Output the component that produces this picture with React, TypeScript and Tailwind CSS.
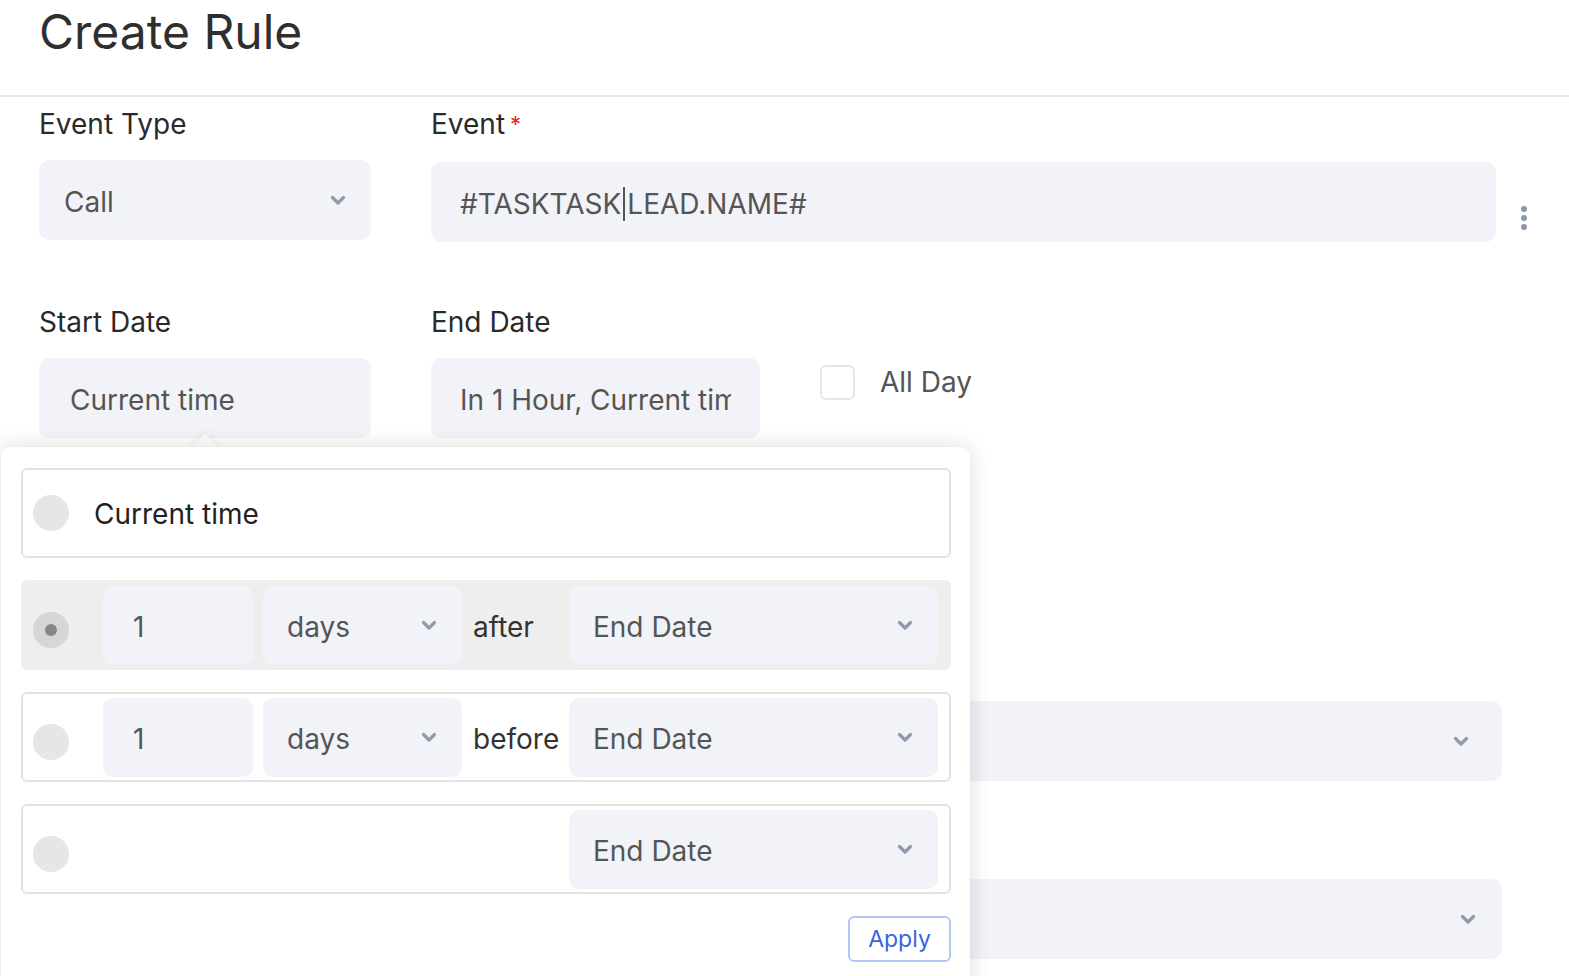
import React from "react";

const Chevron = () => (
  <svg viewBox="0 0 16 11" width="16" height="11" fill="none">
    <path d="M2.5 2.5 L8 8 L13.5 2.5" stroke="#8f9aab" strokeWidth="3.2" strokeLinecap="round" strokeLinejoin="round" />
  </svg>
);

const Radio = ({ selected = false, low = false }: { selected?: boolean; low?: boolean }) => (
  <div
    className={`w-[36px] h-[36px] rounded-full shrink-0 flex items-center justify-center ${
      selected ? "bg-[#d6d6d6]" : "bg-[#e6e6e6]"
    } ${low ? "mt-[10px]" : ""}`}
  >
    {selected && <div className="w-[12px] h-[12px] rounded-full bg-[#868686]" />}
  </div>
);

const Select = ({ label, w }: { label: string; w: string }) => (
  <div className={`${w} h-[79px] rounded-[10px] bg-[#f2f3f8] flex items-center justify-between pl-[24px] pr-[25px] shrink-0`}>
    <span className="text-[28px] text-[#555] pt-[3px]">{label}</span>
    <Chevron />
  </div>
);

const NumInput = () => (
  <div className="w-[150px] h-[79px] rounded-[10px] bg-[#f2f3f8] flex items-center pl-[30px] shrink-0">
    <span className="text-[28px] text-[#555] pt-[3px]">1</span>
  </div>
);

export default function App() {
  return (
    <div
      className="relative w-[1569px] h-[976px] overflow-hidden bg-white"
      style={{ fontFamily: "Inter, 'Noto Sans', sans-serif" }}
    >
      {/* Header */}
      <div className="h-[97px] border-b-2 border-[#e4e7ee] pl-[39px] flex items-start">
        <h1 className="text-[48px] leading-none text-[#2f2f2f] mt-[8px]">Create Rule</h1>
      </div>

      {/* Form */}
      <div className="pl-[39px] pr-[17px]">
        {/* Row 1 */}
        <div className="flex items-start gap-[60px] mt-[11px]">
          <div className="w-[332px]">
            <div className="h-[32px] text-[28px] leading-[32px] text-[#2a2a2a]">Event Type</div>
            <div className="mt-[20px] h-[80px] rounded-[10px] bg-[#f2f3f8] flex items-center justify-between pl-[25px] pr-[25px]">
              <span className="text-[28px] text-[#555] pt-[3px]">Call</span>
              <Chevron />
            </div>
          </div>
          <div className="flex-1 flex items-start">
            <div className="flex-1">
              <div className="h-[32px] text-[28px] leading-[32px] text-[#2a2a2a]">
                Event<span className="text-[#e0262a] ml-[5px] text-[22px] align-top">*</span>
              </div>
              <div className="mt-[22px] h-[80px] rounded-[10px] bg-[#f2f3f8] flex items-center pl-[29px]">
                <span className="text-[28px] text-[#555] pt-[3px]">
                  #TASKTASK<span className="inline-block w-[2px] h-[34px] bg-[#555] align-middle mx-[2px] -mt-[3px]" />LEAD.NAME#
                </span>
              </div>
            </div>
            <div className="w-[56px] h-[80px] mt-[54px] flex flex-col items-center justify-center gap-[3px] pt-[32px]">
              <div className="w-[6px] h-[6px] rounded-full bg-[#8a97ab]" />
              <div className="w-[6px] h-[6px] rounded-full bg-[#8a97ab]" />
              <div className="w-[6px] h-[6px] rounded-full bg-[#8a97ab]" />
            </div>
          </div>
        </div>

        {/* Row 2 */}
        <div className="flex items-start gap-[60px] mt-[64px]">
          <div className="w-[332px]">
            <div className="h-[32px] text-[28px] leading-[32px] text-[#2a2a2a]">Start Date</div>
            <div className="mt-[20px] h-[80px] rounded-[10px] bg-[#f2f3f8] flex items-center pl-[31px]">
              <span className="text-[28px] text-[#555] pt-[3px]">Current time</span>
            </div>
          </div>
          <div className="w-[329px]">
            <div className="h-[32px] text-[28px] leading-[32px] text-[#2a2a2a]">End Date</div>
            <div className="mt-[20px] h-[80px] rounded-[10px] bg-[#f2f3f8] flex items-center pl-[29px] pr-[29px] overflow-hidden">
              <span className="text-[28px] text-[#555] whitespace-nowrap overflow-hidden pt-[3px]">In 1 Hour, Current time</span>
            </div>
          </div>
          <div className="flex items-center gap-[25px] h-[50px] mt-[51px]">
            <div className="w-[35px] h-[35px] rounded-[6px] border-2 border-[#e1e6f0] bg-white" />
            <span className="text-[28px] text-[#555]">All Day</span>
          </div>
        </div>

        {/* Row 3 */}
        <div className="mt-[211px] w-[1463px]">
          <div className="h-[32px] text-[28px] leading-[32px] text-[#2a2a2a]">Reminder</div>
          <div className="mt-[20px] h-[80px] rounded-[10px] bg-[#f2f3f8] flex items-center justify-end pr-[33px]">
            <Chevron />
          </div>
        </div>

        {/* Row 4 */}
        <div className="mt-[46px] w-[1463px]">
          <div className="h-[32px] text-[28px] leading-[32px] text-[#2a2a2a]">Assign To</div>
          <div className="mt-[20px] h-[80px] rounded-[10px] bg-[#f2f3f8] flex items-center justify-end pr-[26px]">
            <Chevron />
          </div>
        </div>
      </div>

      {/* Popover arrow */}
      <div className="absolute left-[195px] top-[438px] w-[20px] h-[20px] rotate-45 bg-white shadow-[0_0_10px_rgba(0,0,0,0.08)]" />

      {/* Popover */}
      <div className="absolute left-[1px] top-[447px] w-[969px] h-[560px] bg-white rounded-[10px] shadow-[0_0_22px_rgba(0,0,0,0.14)] pl-[20px] pr-[19px] pt-[21px]">
        <div className="flex flex-col gap-[22px]">
          {/* Option 1 */}
          <div className="h-[90px] rounded-[6px] border-2 border-[#e3e3e3] flex items-center pl-[10px]">
            <Radio />
            <span className="ml-[25px] text-[28px] text-[#222] pt-[2px]">Current time</span>
          </div>

          {/* Option 2 selected */}
          <div className="h-[90px] rounded-[6px] border-2 border-[#eeeeee] bg-[#eeeeee] flex items-center pl-[10px]">
            <Radio selected low />
            <div className="ml-[34px] flex items-center gap-[10px]">
              <NumInput />
              <Select label="days" w="w-[199px]" />
            </div>
            <span className="w-[107px] pl-[11px] text-[28px] text-[#333] pt-[3px]">after</span>
            <Select label="End Date" w="w-[369px]" />
          </div>

          {/* Option 3 */}
          <div className="h-[90px] rounded-[6px] border-2 border-[#e3e3e3] flex items-center pl-[10px]">
            <Radio low />
            <div className="ml-[34px] flex items-center gap-[10px]">
              <NumInput />
              <Select label="days" w="w-[199px]" />
            </div>
            <span className="w-[107px] pl-[11px] text-[28px] text-[#333] pt-[3px]">before</span>
            <Select label="End Date" w="w-[369px]" />
          </div>

          {/* Option 4 */}
          <div className="h-[90px] rounded-[6px] border-2 border-[#e3e3e3] flex items-center pl-[10px]">
            <Radio low />
            <div className="w-[500px] shrink-0" />
            <Select label="End Date" w="w-[369px]" />
          </div>
        </div>

        <div className="flex justify-end mt-[22px]">
          <button className="w-[103px] h-[46px] rounded-[6px] border-2 border-[#b5c6f6] bg-white text-[23px] text-[#3a63e4]">
            Apply
          </button>
        </div>
      </div>
    </div>
  );
}
